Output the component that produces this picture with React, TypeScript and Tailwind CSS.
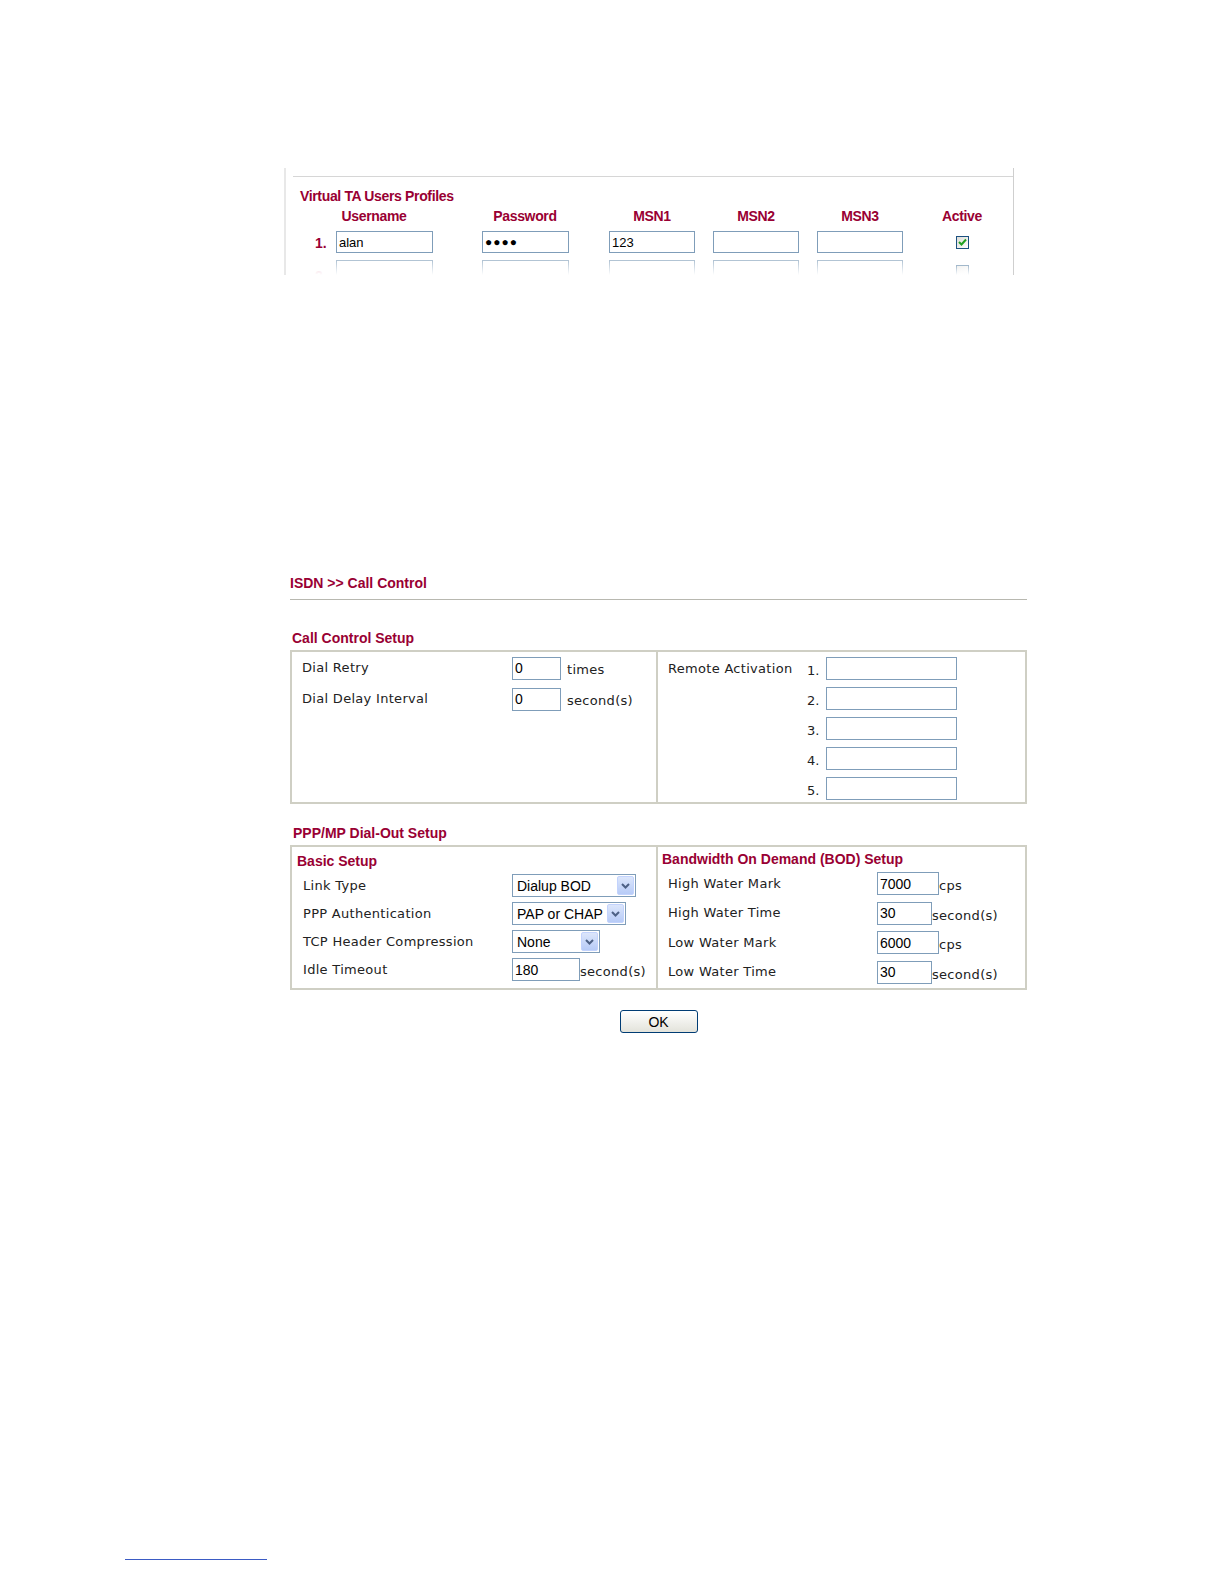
import React from "react";

const maroon = "text-[#990033]";

function TInput({ w, value, pw }: { w: string; value?: string; pw?: boolean }) {
  return (
    <div
      className={`${w} h-[22px] border border-[#7f9db9] bg-white flex items-center pl-[2px] text-[13px] text-black leading-none overflow-hidden`}
      style={{ fontFamily: '"Liberation Sans", Arial, sans-serif' }}
    >
      {pw ? <span className="tracking-[1px] text-[12px]">●●●●</span> : value}
    </div>
  );
}

function Input({ w, value }: { w: string; value?: string }) {
  return (
    <div
      className={`${w} h-[23px] border border-[#7f9db9] bg-white flex items-center pl-[2px] text-[14px] text-black leading-none`}
      style={{ fontFamily: '"Liberation Sans", Arial, sans-serif' }}
    >
      {value}
    </div>
  );
}

function Select({ w, value }: { w: string; value: string }) {
  return (
    <div
      className={`${w} h-[23px] border border-[#7f9db9] bg-white flex items-center justify-between pl-[4px] pr-[1px] text-[14px] text-black leading-none`}
      style={{ fontFamily: '"Liberation Sans", Arial, sans-serif' }}
    >
      <span className="whitespace-nowrap">{value}</span>
      <div className="w-[17px] h-[19px] rounded-[2px] bg-gradient-to-b from-[#dce6fb] to-[#b7cbf7] border border-[#c3d3fd] flex items-center justify-center shrink-0">
        <svg width="9" height="6" viewBox="0 0 9 6">
          <path d="M1 1 L4.5 4.5 L8 1" stroke="#4d6185" strokeWidth="2" fill="none" />
        </svg>
      </div>
    </div>
  );
}

function Label({ children, w }: { children: React.ReactNode; w: string }) {
  return (
    <div
      className={`${w} shrink-0 text-[13px] text-[#222] tracking-[0.3px] whitespace-nowrap`}
      style={{ fontFamily: '"DejaVu Sans", Verdana, sans-serif' }}
    >
      {children}
    </div>
  );
}

function Unit({ children }: { children: React.ReactNode }) {
  return (
    <span
      className="text-[13px] text-[#222] tracking-[0.3px] self-end leading-[18px]"
      style={{ fontFamily: '"DejaVu Sans", Verdana, sans-serif' }}
    >
      {children}
    </span>
  );
}

const titleFont = { fontFamily: '"Liberation Sans", Arial, sans-serif' };

export default function App() {
  return (
    <div className="w-[1224px] h-[1584px] bg-white relative overflow-hidden">
      {/* Top: Virtual TA Users Profiles snippet */}
      <div className="pt-[168px]">
        <div className="ml-[284px] w-[730px] h-[107px] overflow-hidden border-l-2 border-l-[#e8e8e8] border-r border-r-[#cfcfcf] relative">
          <div className="mt-[8px] ml-[7px] border-t border-[#d6d6d6]" />
          <div
            className={`ml-[14px] mt-[11px] text-[14px] font-bold tracking-[-0.35px] leading-[16px] ${maroon}`}
            style={titleFont}
          >
            Virtual TA Users Profiles
          </div>
          {/* headers */}
          <div
            className={`flex mt-[4px] text-[14px] font-bold tracking-[-0.35px] leading-[16px] ${maroon}`}
            style={titleFont}
          >
            <div className="ml-[38px] w-[100px] text-center">Username</div>
            <div className="ml-[51px] w-[100px] text-center">Password</div>
            <div className="ml-[27px] w-[100px] text-center">MSN1</div>
            <div className="ml-[4px] w-[100px] text-center">MSN2</div>
            <div className="ml-[4px] w-[100px] text-center">MSN3</div>
            <div className="ml-[22px] w-[60px] text-center">Active</div>
          </div>
          {/* row 1 */}
          <div className="flex items-center mt-[6px]">
            <div
              className={`w-[50px] pl-[29px] text-[14px] font-bold pt-[3px] ${maroon}`}
              style={titleFont}
            >
              1.
            </div>
            <TInput w="w-[97px]" value="alan" />
            <div className="ml-[49px]">
              <TInput w="w-[87px]" pw />
            </div>
            <div className="ml-[40px]">
              <TInput w="w-[86px]" value="123" />
            </div>
            <div className="ml-[18px]">
              <TInput w="w-[86px]" />
            </div>
            <div className="ml-[18px]">
              <TInput w="w-[86px]" />
            </div>
            <div className="ml-[53px] w-[13px] h-[13px] border border-[#1c5180] bg-gradient-to-br from-[#dcdcd7] to-white flex items-center justify-center">
              <svg width="9" height="8" viewBox="0 0 9 8">
                <path d="M1 4 L3.5 6.5 L8 1.5" stroke="#21a121" strokeWidth="2" fill="none" />
              </svg>
            </div>
          </div>
          {/* row 2 (faded, cut off) */}
          <div className="flex items-start mt-[6px] opacity-60">
            <div
              className="w-[50px] pl-[29px] text-[14px] font-bold pt-[6px] text-[#e08aa5]"
              style={titleFont}
            >
              2.
            </div>
            <TInput w="w-[97px]" />
            <div className="ml-[49px]">
              <TInput w="w-[87px]" />
            </div>
            <div className="ml-[40px]">
              <TInput w="w-[86px]" />
            </div>
            <div className="ml-[18px]">
              <TInput w="w-[86px]" />
            </div>
            <div className="ml-[18px]">
              <TInput w="w-[86px]" />
            </div>
            <div className="ml-[53px] mt-[5px] w-[13px] h-[13px] border border-[#1c5180] bg-gradient-to-br from-[#dcdcd7] to-white" />
          </div>
          <div className="absolute left-0 right-0 bottom-0 h-[14px] bg-gradient-to-b from-transparent to-white" />
        </div>
      </div>

      {/* Bottom: ISDN >> Call Control */}
      <div className="ml-[290px] w-[737px] mt-[300px]">
        <div className={`text-[14px] font-bold leading-[16px] ${maroon}`} style={titleFont}>
          ISDN &gt;&gt; Call Control
        </div>
        <div className="mt-[8px] border-t border-[#b8b8b0]" />

        <div className={`mt-[30px] ml-[2px] text-[14px] font-bold leading-[16px] ${maroon}`} style={titleFont}>
          Call Control Setup
        </div>
        <div className="mt-[4px] h-[154px] border-2 border-[#cfcfc4] flex">
          <div className="w-[366px] border-r-2 border-[#cfcfc4] pt-[4px] pl-[10px] flex flex-col gap-[7px]">
            <div className="flex items-center">
              <Label w="w-[210px]">Dial Retry</Label>
              <Input w="w-[49px]" value="0" />
              <span className="ml-[6px]">
                <Unit>times</Unit>
              </span>
            </div>
            <div className="flex items-center">
              <Label w="w-[210px]">Dial Delay Interval</Label>
              <Input w="w-[49px]" value="0" />
              <span className="ml-[6px]">
                <Unit>second(s)</Unit>
              </span>
            </div>
          </div>
          <div className="flex-1 pt-[5px] pl-[10px] flex flex-col gap-[6.5px]">
            {["1.", "2.", "3.", "4.", "5."].map((n, i) => (
              <div key={n} className="flex items-center">
                <Label w="w-[139px]">{i === 0 ? "Remote Activation" : ""}</Label>
                <div
                  className="w-[19px] text-[13px] text-[#222] pt-[4px]"
                  style={{ fontFamily: '"DejaVu Sans", Verdana, sans-serif' }}
                >
                  {n}
                </div>
                <Input w="w-[131px]" />
              </div>
            ))}
          </div>
        </div>

        <div className={`mt-[21px] ml-[3px] text-[14px] font-bold leading-[16px] ${maroon}`} style={titleFont}>
          PPP/MP Dial-Out Setup
        </div>
        <div className="mt-[4px] h-[145px] border-2 border-[#cfcfc4] flex">
          <div className="w-[366px] border-r-2 border-[#cfcfc4] pt-[6px] pl-[5px]">
            <div className={`text-[14px] font-bold leading-[16px] ${maroon}`} style={titleFont}>
              Basic Setup
            </div>
            <div className="mt-[5px] pl-[6px] flex flex-col gap-[5px]">
              <div className="flex items-center">
                <Label w="w-[209px]">Link Type</Label>
                <Select w="w-[124px]" value="Dialup BOD" />
              </div>
              <div className="flex items-center">
                <Label w="w-[209px]">PPP Authentication</Label>
                <Select w="w-[114px]" value="PAP or CHAP" />
              </div>
              <div className="flex items-center">
                <Label w="w-[209px]">TCP Header Compression</Label>
                <Select w="w-[88px]" value="None" />
              </div>
              <div className="flex items-center">
                <Label w="w-[209px]">Idle Timeout</Label>
                <Input w="w-[68px]" value="180" />
                <Unit>second(s)</Unit>
              </div>
            </div>
          </div>
          <div className="flex-1 pt-[4px] pl-[4px]">
            <div className={`text-[14px] font-bold leading-[16px] ${maroon}`} style={titleFont}>
              Bandwidth On Demand (BOD) Setup
            </div>
            <div className="mt-[5px] pl-[6px] flex flex-col gap-[6.5px]">
              <div className="flex items-center">
                <Label w="w-[209px]">High Water Mark</Label>
                <Input w="w-[62px]" value="7000" />
                <Unit>cps</Unit>
              </div>
              <div className="flex items-center">
                <Label w="w-[209px]">High Water Time</Label>
                <Input w="w-[55px]" value="30" />
                <Unit>second(s)</Unit>
              </div>
              <div className="flex items-center">
                <Label w="w-[209px]">Low Water Mark</Label>
                <Input w="w-[62px]" value="6000" />
                <Unit>cps</Unit>
              </div>
              <div className="flex items-center">
                <Label w="w-[209px]">Low Water Time</Label>
                <Input w="w-[55px]" value="30" />
                <Unit>second(s)</Unit>
              </div>
            </div>
          </div>
        </div>

        <div className="flex justify-center mt-[20px]">
          <button
            className="w-[78px] h-[23px] rounded-[3px] border border-[#003c74] bg-gradient-to-b from-white to-[#e3e3db] text-[14px] text-black leading-none"
            style={titleFont}
          >
            OK
          </button>
        </div>
      </div>

      {/* footer rule */}
      <div className="ml-[125px] mt-[526px] w-[142px] border-t border-[#3b5bc4]" />
    </div>
  );
}
